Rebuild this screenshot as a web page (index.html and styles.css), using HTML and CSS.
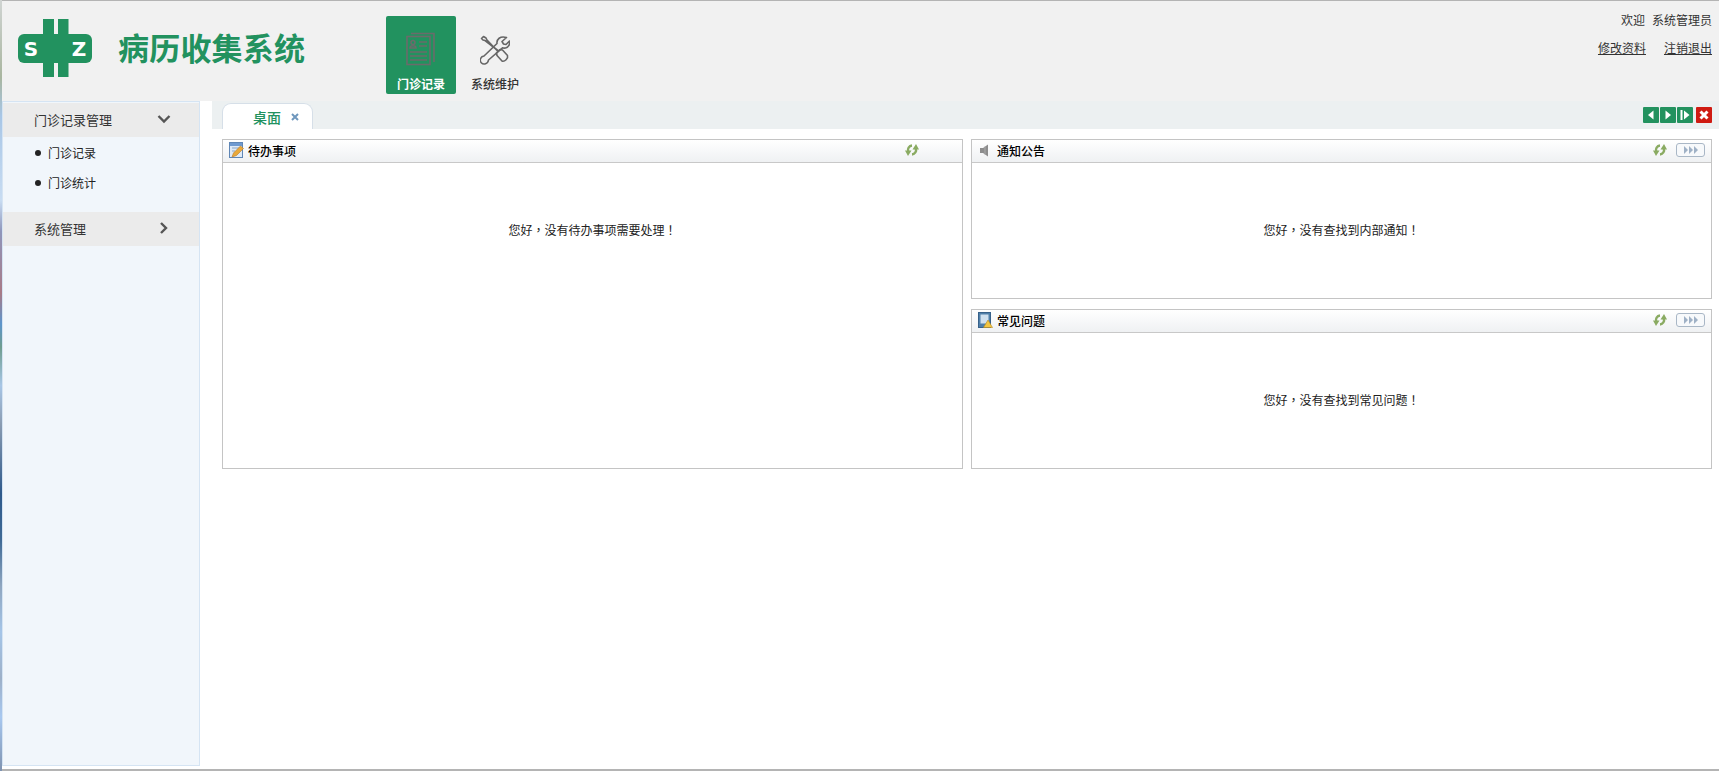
FILE: index.html
```html
<!DOCTYPE html>
<html lang="zh">
<head>
<meta charset="utf-8">
<title>病历收集系统</title>
<link rel="stylesheet" href="styles.css">
</head>
<body>
<div class="strip"></div>
<div class="page">
  <header class="top">
    <div class="brand">
      <svg class="logo" width="75" height="60" viewBox="0 0 75 60">
        <rect x="25" y="0" width="25.500" height="58" fill="#22925f"/>
        <rect x="0" y="15" width="74" height="29" rx="6" fill="#22925f"/>
        <rect x="36" y="0" width="4" height="15" fill="#f1f1f1"/>
        <rect x="36" y="44" width="4" height="14" fill="#f1f1f1"/>
        <text x="13" y="37" class="logo-letter">S</text>
        <text x="61" y="37" class="logo-letter">Z</text>
      </svg>
      <div class="title">病历收集系统</div>
    </div>
    <nav class="nav">
      <div class="nav-item active">
        <svg width="30" height="34" viewBox="0 0 30 34" fill="none" stroke="#6b6b6b" stroke-width="1.600">
          <path d="M5 1.500H28V30"/>
          <rect x="1" y="4.500" width="23" height="28"/>
          <circle cx="7" cy="10.500" r="2"/>
          <path d="M4 16c0-3 6-3 6 0z"/>
          <path d="M13 10h8M13 14h8M4 20h17M4 24h17M4 28h17"/>
        </svg>
        <span>门诊记录</span>
      </div>
      <div class="nav-item">
        <svg class="tools-icon" width="30" height="30" viewBox="0 0 30 30" fill="none" stroke="#666" stroke-width="1.600" stroke-linejoin="round">
          <path d="M1.500 3.500 3.500 1.500 6 3l1 2 11 11.500 2-2 2.500.5 5 5.500c1 3-3 6.500-5.500 5.500l-5-5.500-.5-2.500 2-2L5 5.500l-2-.5z"/>
          <path d="M26.500 2.500 22 6.500l1.500 2.500 2.500.5 3.500-3.500c.8 3-1 6.500-4 7-2 .3-3-.2-3-.2L8.500 25c-.5 4-5 5-7 3-2.500-2.500-1-6.500 2.500-7L17 8.500c-.5-4 3-8 9.500-6z"/>
        </svg>
        <span>系统维护</span>
      </div>
    </nav>
    <div class="user">
      <div class="welcome"><span>欢迎</span><span>系统管理员</span></div>
      <div class="links"><a>修改资料</a><a>注销退出</a></div>
    </div>
  </header>
  <div class="main">
    <aside class="side">
      <div class="group">
        <span>门诊记录管理</span>
        <svg width="14" height="10" viewBox="0 0 14 10" fill="none" stroke="#555" stroke-width="2.400"><path d="M1.500 2 7 7.500 12.500 2"/></svg>
      </div>
      <ul class="sub">
        <li>门诊记录</li>
        <li>门诊统计</li>
      </ul>
      <div class="group">
        <span>系统管理</span>
        <svg width="14" height="12" viewBox="0 0 14 12" fill="none" stroke="#555" stroke-width="2.400"><path d="M4 1 9 6 4 11"/></svg>
      </div>
    </aside>
    <section class="work">
      <div class="tabs">
        <div class="tab">
          <span class="tab-label">桌面</span>
          <svg class="tab-close" width="8" height="8" viewBox="0 0 8 8"><path d="M1 1l6 6M7 1 1 7" stroke="#6f97bd" stroke-width="2"/></svg>
        </div>
        <div class="tab-tools">
          <span class="tool"><svg width="16" height="16" viewBox="0 0 16 16"><path d="M10.500 3.500v9L5 8z" fill="#fff"/></svg></span>
          <span class="tool"><svg width="16" height="16" viewBox="0 0 16 16"><path d="M5.500 3.500v9L11 8z" fill="#fff"/></svg></span>
          <span class="tool"><svg width="16" height="16" viewBox="0 0 16 16"><path d="M3.500 3h2v10h-2zM7 3.500v9L12.500 8z" fill="#fff"/></svg></span>
          <span class="tool red"><svg width="16" height="16" viewBox="0 0 16 16"><path d="M4.500 4.500l7 7M11.500 4.500l-7 7" stroke="#fff" stroke-width="3"/></svg></span>
        </div>
      </div>
      <div class="desk">
        <div class="col">
          <div class="panel">
            <div class="panel-head">
              <svg class="pi" width="15" height="16" viewBox="0 0 15 16"><rect x=".5" y=".5" width="13" height="15" fill="#dfeaf6" stroke="#5f86b5"/><rect x="1" y="1" width="12" height="3" fill="#6f9ad0"/><path d="M3 6h8M3 9h3" stroke="#8aa7c8"/><path d="M3 15l1.500-4 7-7 3 2.500-7 7z" fill="#e9a93a" stroke="#b8792a" stroke-width=".6"/></svg>
              <span class="pt">待办事项</span>
              <svg class="refresh shift" width="14" height="14" viewBox="0 0 14 14" fill="#8aab62"><path d="M7 2.500A4.500 4.500 0 0 0 3.200 8.500" fill="none" stroke="#8aab62" stroke-width="2.400"/><path d="M0 7.500h6.500L3 13z"/><path d="M7 11.500a4.500 4.500 0 0 0 3.800-6" fill="none" stroke="#8aab62" stroke-width="2.400"/><path d="M7.500 6.500H14L11 1z"/></svg>
            </div>
            <div class="panel-body">您好<span class="punct" lang="zh-Hant">，</span>没有待办事项需要处理<span class="punct" lang="zh-Hant">！</span></div>
          </div>
        </div>
        <div class="col">
          <div class="panel">
            <div class="panel-head">
              <svg class="pi" width="15" height="15" viewBox="0 0 15 15"><path d="M2 5h3l5-3.500v12L5 10H2z" fill="#8d8d8d"/><path d="M7 3.500v8" stroke="#aaa"/></svg>
              <span class="pt">通知公告</span>
              <svg class="refresh" width="14" height="14" viewBox="0 0 14 14" fill="#8aab62"><path d="M7 2.500A4.500 4.500 0 0 0 3.200 8.500" fill="none" stroke="#8aab62" stroke-width="2.400"/><path d="M0 7.500h6.500L3 13z"/><path d="M7 11.500a4.500 4.500 0 0 0 3.800-6" fill="none" stroke="#8aab62" stroke-width="2.400"/><path d="M7.500 6.500H14L11 1z"/></svg>
              <span class="more"><svg width="16" height="8" viewBox="0 0 16 8" fill="#9fb1c6"><path d="M1 0v8l4-4zM6 0v8l4-4zM11 0v8l4-4z"/></svg></span>
            </div>
            <div class="panel-body">您好<span class="punct" lang="zh-Hant">，</span>没有查找到内部通知<span class="punct" lang="zh-Hant">！</span></div>
          </div>
          <div class="panel">
            <div class="panel-head">
              <svg class="pi" width="15" height="16" viewBox="0 0 15 16"><rect x=".5" y=".5" width="12" height="15" fill="#4f7fa9" stroke="#37618a"/><rect x="2.500" y="2.500" width="8" height="9" fill="#cfe0ef"/><path d="M10 8l4.500 7.500h-9z" fill="#f3c641" stroke="#b78a1f" stroke-width=".6"/></svg>
              <span class="pt">常见问题</span>
              <svg class="refresh" width="14" height="14" viewBox="0 0 14 14" fill="#8aab62"><path d="M7 2.500A4.500 4.500 0 0 0 3.200 8.500" fill="none" stroke="#8aab62" stroke-width="2.400"/><path d="M0 7.500h6.500L3 13z"/><path d="M7 11.500a4.500 4.500 0 0 0 3.800-6" fill="none" stroke="#8aab62" stroke-width="2.400"/><path d="M7.500 6.500H14L11 1z"/></svg>
              <span class="more"><svg width="16" height="8" viewBox="0 0 16 8" fill="#9fb1c6"><path d="M1 0v8l4-4zM6 0v8l4-4zM11 0v8l4-4z"/></svg></span>
            </div>
            <div class="panel-body">您好<span class="punct" lang="zh-Hant">，</span>没有查找到常见问题<span class="punct" lang="zh-Hant">！</span></div>
          </div>
        </div>
      </div>
    </section>
  </div>
</div>
</body>
</html>
```
FILE: styles.css
```css
* { box-sizing: border-box; }
html, body { margin: 0; height: 771px; overflow: hidden; }
body {
  display: flex;
  background: #fff;
  font-family: "Noto Sans CJK SC", "Liberation Sans", sans-serif;
  font-size: 12px;
  color: #222;
}
.strip {
  width: 2px;
  flex: none;
  background: linear-gradient(#d0d4d2 0, #a9b6a0 10%, #a8c6e6 15%, #c8dcf2 26%, #8f96bb 30%, #a87a86 38%, #5d95cc 42%, #6f9d8f 45%, #a8c6e6 50%, #8a9cb2 55%, #2f5a8c 64%, #3f6a96 70%, #8fa6c0 76%, #a5c5e8 82%, #9db0c8 88%, #a8c8f0 93%, #7f93b0 100%);
}
.page {
  flex: 1;
  min-width: 0;
  display: flex;
  flex-direction: column;
  border-top: 1px solid #b4b4b4;
  border-bottom: 2px solid #b4b4b4;
}
.top {
  height: 100px;
  flex: none;
  display: flex;
  background: #f1f1f1;
  position: relative;
}
.brand {
  width: 384px;
  flex: none;
  display: flex;
  align-items: flex-start;
  padding: 18px 0 0 16px;
}
.logo { flex: none; }
.logo-letter {
  font: bold 20px "DejaVu Sans", sans-serif;
  fill: #fff;
  text-anchor: middle;
}
.title {
  margin: 8px 0 0 25px;
  font-size: 31px;
  letter-spacing: .2px;
  line-height: 40px;
  font-weight: 700;
  color: #22925f;
  white-space: nowrap;
}
.nav { display: flex; padding-top: 15px; }
.nav-item {
  width: 70px;
  height: 78px;
  margin-right: 4px;
  display: flex;
  flex-direction: column;
  align-items: center;
  justify-content: flex-end;
  padding-bottom: 2px;
  border-radius: 2px;
  font-weight: 500;
  color: #333;
}
.nav-item svg { margin-bottom: 9px; }
.nav-item .tools-icon { margin-bottom: 10px; }
.nav-item span { line-height: 17px; }
.nav-item.active { background: #22925f; color: #fff; font-weight: 700; }
.user {
  margin-left: auto;
  padding: 10px 7px 0 0;
  text-align: right;
  color: #333;
}
.welcome { line-height: 18px; display: flex; gap: 7px; justify-content: flex-end; }
.links { margin-top: 10px; line-height: 18px; display: flex; gap: 18px; justify-content: flex-end; }
.links a { text-decoration: underline; color: #333; }
.main { flex: 1; min-height: 0; display: flex; }
.side {
  width: 198px;
  flex: none;
  margin-bottom: 3px;
  padding-top: 1px;
  background: #f1f6fb;
  border: 1px solid #d5e4f3;
}
.group {
  height: 34px;
  display: flex;
  align-items: center;
  justify-content: space-between;
  background: #ebebeb;
  padding: 0 28px 2px 31px;
  font-size: 13px;
  color: #333;
}
.sub {
  list-style: none;
  margin: 0;
  padding: 1px 0 14px 32px;
}
.sub li {
  height: 30px;
  line-height: 30px;
  display: flex;
  align-items: center;
  gap: 7px;
  color: #222;
}
.sub li::before {
  content: "";
  width: 6px;
  height: 6px;
  border-radius: 50%;
  background: #222;
}
.work { flex: 1; min-width: 0; margin-left: 12px; display: flex; flex-direction: column; }
.tabs {
  height: 28px;
  flex: none;
  display: flex;
  align-items: flex-end;
  background: #ecf0f1;
  padding: 0 7px 0 10px;
  position: relative;
}
.tab {
  width: 91px;
  height: 26px;
  background: #fff;
  border: 1px solid #d6dfe8;
  border-bottom: 0;
  border-radius: 9px 9px 0 0;
  display: flex;
  align-items: center;
  padding-left: 30px;
  gap: 10px;
  font-size: 14px;
}
.tab-label { color: #22925f; line-height: 22px; font-weight: 500; }
.tab-close { flex: none; }
.tab-tools {
  margin-left: auto;
  align-self: flex-start;
  margin-top: 6px;
  display: flex;
  gap: 1px;
}
.tool { width: 16px; height: 16px; background: #22925f; border-radius: 1px; display: block; }
.tool svg { display: block; }
.tool.red { background: #cf1b12; margin-left: 2px; }
.desk {
  flex: 1;
  display: flex;
  gap: 8px;
  padding: 10px 7px 0 10px;
  align-items: flex-start;
}
.col { flex: 1; min-width: 0; display: flex; flex-direction: column; gap: 10px; }
.panel { border: 1px solid #c4c4c4; background: #fff; }
.col:first-child .panel .panel-body { height: 305px; }
.panel-head {
  height: 23px;
  display: flex;
  align-items: center;
  padding: 0 6px 2px 6px;
  border-bottom: 1px solid #c8c8c8;
  background: linear-gradient(#fff 0, #eff1f3 100%);
}
.pi { flex: none; }
.pt { margin-left: 4px; color: #000; font-weight: 500; }
.refresh { margin-left: auto; }
.refresh.shift { margin-right: 37px; }
.more {
  width: 29px;
  height: 14px;
  margin-left: 9px;
  border: 1px solid #a9b7c6;
  border-radius: 3px;
  display: flex;
  align-items: center;
  justify-content: center;
  background: #f7f9fb;
}
.panel-body {
  height: 135px;
  padding-top: 58px;
  text-align: center;
  line-height: 18px;
  color: #222;
}
.punct { font-family: "Noto Sans CJK TC", sans-serif; }
```
